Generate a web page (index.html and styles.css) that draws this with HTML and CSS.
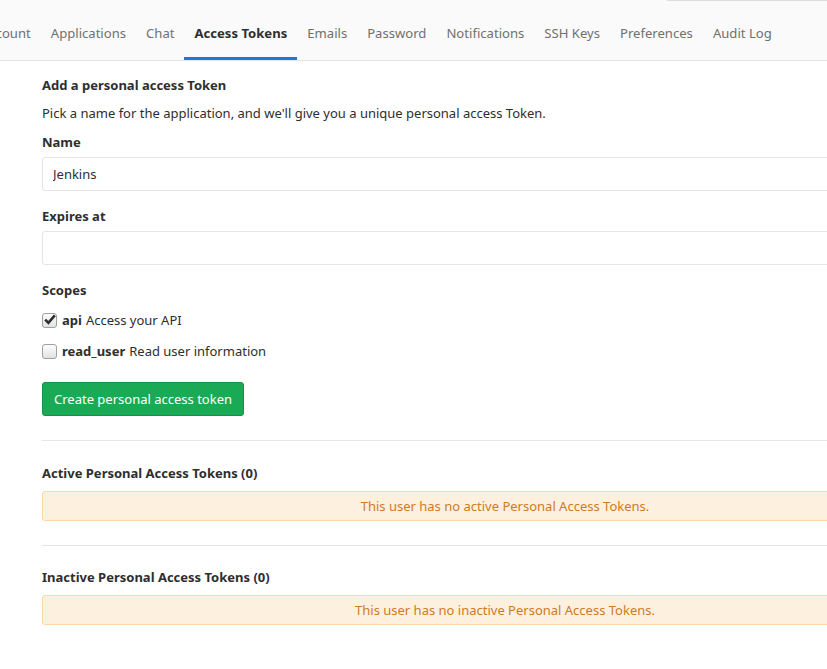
FILE: index.html
```html
<!DOCTYPE html>
<html>
<head>
<meta charset="utf-8">
<link rel="stylesheet" href="styles.css">
</head>
<body>
<header class="nav">
  <div class="nav-search-edge"></div>
  <ul class="tabs">
    <li class="tab">Account</li>
    <li class="tab">Applications</li>
    <li class="tab">Chat</li>
    <li class="tab active">Access Tokens</li>
    <li class="tab">Emails</li>
    <li class="tab">Password</li>
    <li class="tab">Notifications</li>
    <li class="tab">SSH Keys</li>
    <li class="tab">Preferences</li>
    <li class="tab">Audit Log</li>
  </ul>
</header>
<main class="content">
  <h5 class="title">Add a personal access Token</h5>
  <p class="lead">Pick a name for the application, and we'll give you a unique personal access Token.</p>

  <div class="field">
    <label class="label">Name</label>
    <input class="input" type="text" value="Jenkins">
  </div>
  <div class="field">
    <label class="label">Expires at</label>
    <input class="input" type="text" value="">
  </div>
  <div class="field">
    <label class="label">Scopes</label>
    <div class="scope">
      <span class="check checked"><svg width="12" height="11" viewBox="0 0 12 11"><path d="M1.2 5.6 L4.4 8.8 L10.8 1.4" fill="none" stroke="#2e2e2e" stroke-width="2.6" stroke-linejoin="miter"/></svg></span>
      <b>api</b> Access your API
    </div>
    <div class="scope">
      <span class="check"></span>
      <b>read_user</b> Read user information
    </div>
  </div>
  <div class="actions">
    <button class="btn">Create personal access token</button>
  </div>

  <hr class="sep">
  <h5 class="title sub">Active Personal Access Tokens (0)</h5>
  <div class="message">This user has no active Personal Access Tokens.</div>

  <hr class="sep second">
  <h5 class="title sub">Inactive Personal Access Tokens (0)</h5>
  <div class="message">This user has no inactive Personal Access Tokens.</div>
</main>
</body>
</html>
```
FILE: styles.css
```css
html, body {
  margin: 0;
  padding: 0;
  background: #fff;
  overflow: hidden;
}
body {
  font-family: "Noto Sans", "Open Sans", sans-serif;
  font-size: 13px;
  color: #2e2e2e;
  width: 827px;
  height: 669px;
}
.nav {
  position: relative;
  height: 60px;
  background: #fafafa;
  border-bottom: 1px solid #e5e5e5;
}
.nav-search-edge {
  position: absolute;
  left: 667px;
  right: 0;
  top: 0;
  height: 1px;
  background: #dcdcdc;
}
.tabs {
  list-style: none;
  margin: 0 0 0 -29px;
  padding: 0;
  display: flex;
  height: 60px;
  white-space: nowrap;
}
.tab {
  padding: 23px 10px 0;
  font-size: 13.1px;
  line-height: 20px;
  height: 60px;
  box-sizing: border-box;
  color: #707070;
}
.tab.active {
  color: #2e2e2e;
  font-weight: 700;
  border-bottom: 3px solid #1f78d1;
}
.content {
  width: 926px;
  margin-left: 42px;
  padding-top: 14px;
}
.title {
  margin: 0;
  font-size: 13px;
  font-weight: 700;
  line-height: 20px;
}
.lead {
  margin: 8px 0 0;
  line-height: 20px;
}
.field {
  margin-top: 9px;
}
.field + .field {
  margin-top: 15px;
}
.label {
  display: block;
  font-weight: 700;
  line-height: 20px;
  margin-bottom: 5px;
}
.input {
  display: block;
  box-sizing: border-box;
  width: 100%;
  height: 34px;
  border: 1px solid #e5e5e5;
  border-radius: 3px;
  padding: 0 10px;
  font: inherit;
  color: #2e2e2e;
  outline: none;
}
.scope {
  display: flex;
  align-items: center;
  gap: 4px;
  line-height: 20px;
  margin-top: 10px;
}
.scope + .scope {
  margin-top: 11px;
}
.check {
  width: 15px;
  height: 15px;
  box-sizing: border-box;
  border: 1px solid #a0a0a0;
  border-radius: 3px;
  background: linear-gradient(#fdfdfd, #e2e2e2);
  display: inline-flex;
  align-items: center;
  justify-content: center;
  margin-right: 1px;
}
.check svg {
  margin-top: -2px;
}
.actions {
  margin-top: 21px;
}
.btn {
  font: inherit;
  color: #fff;
  background: #1aaa55;
  border: 1px solid #168f48;
  border-radius: 3px;
  height: 34px;
  padding: 0 10px;
  width: 202px;
}
.sep {
  margin: 24px 0 0;
  border: 0;
  border-top: 1px solid #e5e5e5;
}
.sub {
  margin-top: 22px;
}
.message {
  margin-top: 8px;
  height: 30px;
  box-sizing: border-box;
  line-height: 28px;
  text-align: center;
  color: #cf7b22;
  background: #fef0df;
  border: 1px solid #fbd8a5;
  border-radius: 3px;
}
.second {
  margin-top: 24px;
}
.second + .sub {
  margin-top: 21px;
}
```
